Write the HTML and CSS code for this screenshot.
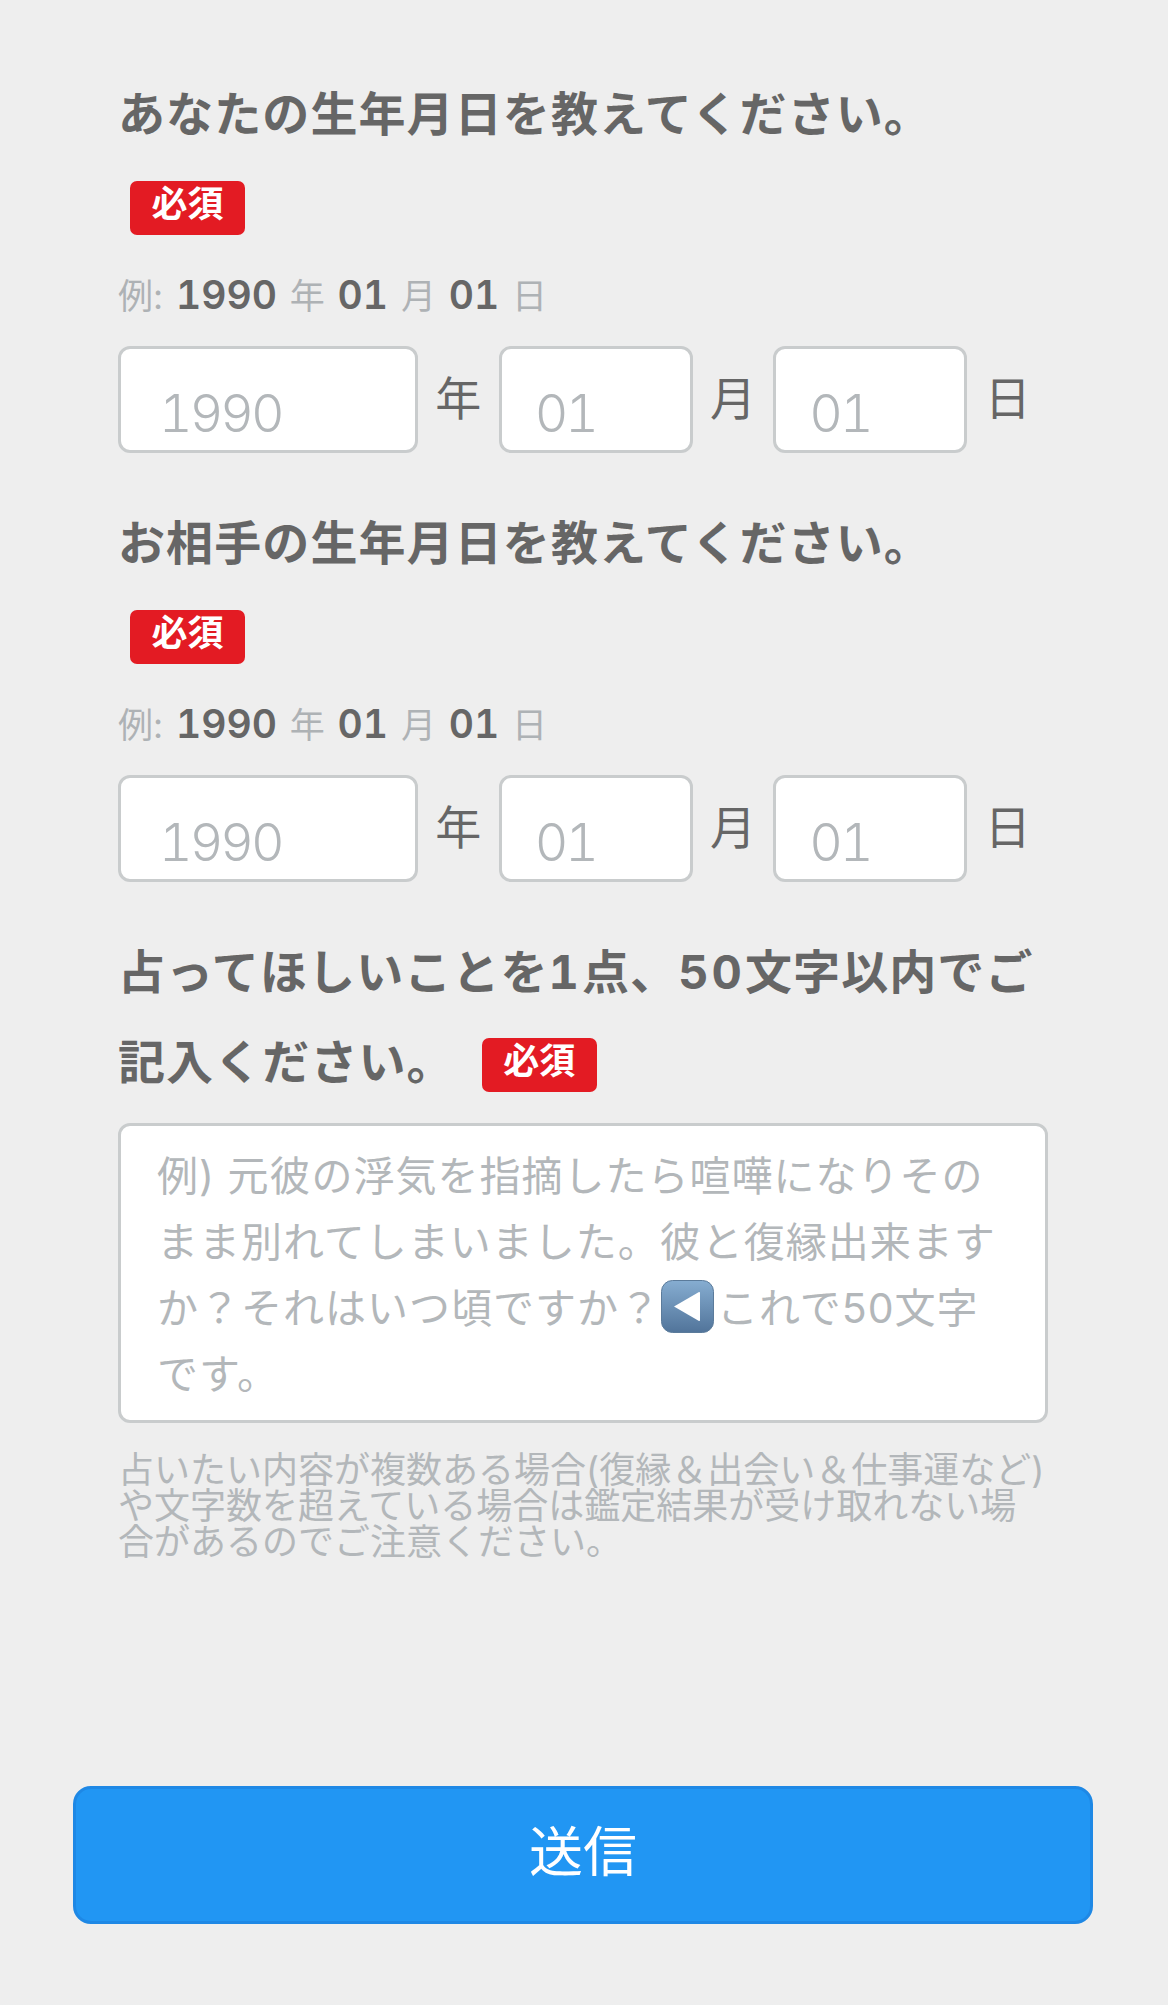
FILE: index.html
```html
<!DOCTYPE html>
<html lang="ja">

<head>
    <meta charset="UTF-8">
    <meta name="viewport" content="width=device-width, initial-scale=1.0">
    <title>占いフォーム</title>
    <link rel="stylesheet" href="styles.css">
</head>

<body>
    <form class="form">
        <div class="field">
            <h2 class="field-title">あなたの生年月日を教えてください。</h2>
            <span class="required required-block">必須</span>
            <p class="example">例: <b>1990</b> 年 <b>01</b> 月 <b>01</b> 日</p>
            <div class="date-row">
                <input class="date-input date-year" type="text" placeholder="1990">
                <span class="date-unit">年</span>
                <input class="date-input date-short" type="text" placeholder="01">
                <span class="date-unit">月</span>
                <input class="date-input date-short" type="text" placeholder="01">
                <span class="date-unit">日</span>
            </div>
        </div>

        <div class="field">
            <h2 class="field-title">お相手の生年月日を教えてください。</h2>
            <span class="required required-block">必須</span>
            <p class="example">例: <b>1990</b> 年 <b>01</b> 月 <b>01</b> 日</p>
            <div class="date-row">
                <input class="date-input date-year" type="text" placeholder="1990">
                <span class="date-unit">年</span>
                <input class="date-input date-short" type="text" placeholder="01">
                <span class="date-unit">月</span>
                <input class="date-input date-short" type="text" placeholder="01">
                <span class="date-unit">日</span>
            </div>
        </div>

        <div class="field field-last">
            <h2 class="field-title">占ってほしいことを<span class="num">1</span>点、<span class="num">50</span>文字以内でご<br>記入ください。<span class="required required-inline">必須</span></h2>
            <div class="textarea" role="textbox">例) 元彼の浮気を指摘したら喧嘩になりその<br>まま別れてしまいました。彼と復縁出来ます<br>か？それはいつ頃ですか？<svg class="back-emoji" viewBox="0 0 53 53" aria-hidden="true">
                    <defs>
                        <linearGradient id="emojiFill" x1="0" y1="0" x2="0" y2="1">
                            <stop offset="0" stop-color="#86add1" />
                            <stop offset="1" stop-color="#51749a" />
                        </linearGradient>
                    </defs>
                    <rect x="0.5" y="0.5" width="52" height="52" rx="11" fill="url(#emojiFill)" stroke="#5b7b9b" />
                    <path d="M13 26.5 L38 12 Q39 11.7 39 13 L39 40 Q39 41.3 38 41 Z" fill="#fff" />
                </svg>これで50文字<br>です。</div>
            <p class="note">占いたい内容が複数ある場合(復縁＆出会い＆仕事運など)<br>や文字数を超えている場合は鑑定結果が受け取れない場<br>合があるのでご注意ください。</p>
        </div>

        <button class="submit" type="button">送信</button>
    </form>
</body>

</html>
```

FILE: styles.css
```css
* {
    box-sizing: border-box;
}

html,
body {
    margin: 0;
    height: 100%;
}

body {
    font-family: Inter, "Noto Sans CJK JP", sans-serif;
    background-color: #eeeeee;
    color: #666;
}

.form {
    padding-top: 69px;
}

.field {
    margin: 0 120px 45px 118px;
}

.field-title {
    margin: 0;
    font-size: 47px;
    line-height: 90px;
    font-weight: 700;
    letter-spacing: 1.1px;
    color: #666;
    white-space: nowrap;
}

.field-title .num {
    font-variant-numeric: tabular-nums;
    letter-spacing: 3px;
}

.required {
    display: inline-block;
    width: 115px;
    height: 54px;
    background: #e31b23;
    color: #fff;
    border-radius: 7px;
    font-size: 36px;
    line-height: 46px;
    font-weight: 700;
    letter-spacing: 0;
    text-align: center;
    vertical-align: top;
}

.required-block {
    display: block;
    margin: 22px 0 0 12px;
}

.required-inline {
    margin: 21px 0 0 27px;
}

.example {
    margin: 35px 0 0;
    height: 50px;
    font-size: 35px;
    line-height: 50px;
    word-spacing: 3px;
    color: #aeb2b5;
    white-space: nowrap;
}

.example b {
    font-size: 39px;
    font-weight: 600;
    font-variant-numeric: tabular-nums;
    color: #666;
}

.date-row {
    display: flex;
    align-items: center;
    height: 107px;
    margin-top: 26px;
}

.date-input {
    height: 107px;
    padding: 28px 0 0 38px;
    border: 3px solid #c9cccd;
    border-radius: 12px;
    background: #fff;
    font-family: inherit;
    font-size: 52px;
    font-weight: 300;
    font-variant-numeric: tabular-nums;
    letter-spacing: -3px;
    color: #666;
    outline: none;
}

.date-input::placeholder {
    color: #b3b7ba;
    opacity: 1;
}

.date-year {
    width: 300px;
}

.date-short {
    width: 194px;
    padding-left: 33px;
}

.date-unit {
    width: 81px;
    text-align: center;
    font-size: 46px;
    line-height: 1;
    margin-top: -3px;
}

.textarea {
    height: 300px;
    margin-top: 16px;
    padding: 17px 30px 0 36px;
    border: 3px solid #c9cccd;
    border-radius: 12px;
    background: #fff;
    font-size: 41px;
    line-height: 66px;
    letter-spacing: 1px;
    color: #b3b7ba;
    white-space: nowrap;
}

.back-emoji {
    width: 53px;
    height: 53px;
    margin: 0 3px 0 0;
    vertical-align: -10px;
}

.note {
    margin: 29px 0 0;
    font-size: 36px;
    line-height: 36px;
    color: #b3b7ba;
    white-space: nowrap;
}

.field-last {
    margin-bottom: 0;
}

.submit {
    display: block;
    width: 1020px;
    height: 138px;
    margin: 226px 0 0 73px;
    padding: 0 0 4px;
    border: 3px solid #1e88e5;
    border-radius: 18px;
    background: #2196f3;
    color: #fff;
    font-family: inherit;
    font-size: 54px;
    line-height: 1;
}
```
